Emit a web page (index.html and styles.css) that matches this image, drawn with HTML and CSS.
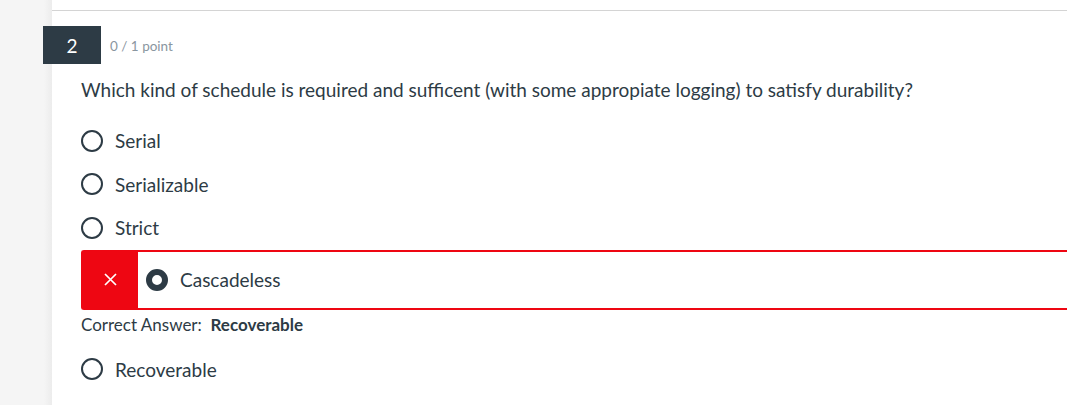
FILE: index.html
```html
<!DOCTYPE html>
<html>
<head>
<meta charset="utf-8">
<link rel="stylesheet" href="styles.css">
</head>
<body>
<div class="page">
  <aside class="sidebar"></aside>
  <main class="main">
    <div class="topline"></div>
    <div class="qheader">
      <div class="qnum">2</div>
      <div class="qpoints">0 / 1 point</div>
    </div>
    <div class="qbody">
      <p class="qtext">Which kind of schedule is required and sufficent (with some appropiate logging) to satisfy durability?</p>
      <div class="answers">
        <div class="answer"><span class="radio"></span><span class="label">Serial</span></div>
        <div class="answer"><span class="radio"></span><span class="label">Serializable</span></div>
        <div class="answer"><span class="radio"></span><span class="label">Strict</span></div>
        <div class="answer wrong">
          <div class="mark">
            <svg width="15" height="15" viewBox="0 0 15 15"><path d="M2 2 L13 13 M13 2 L2 13" stroke="#fff" stroke-width="1.7" fill="none"/></svg>
          </div>
          <span class="radio checked"></span><span class="label">Cascadeless</span>
        </div>
        <div class="correct">Correct Answer:&nbsp; <b>Recoverable</b></div>
        <div class="answer"><span class="radio"></span><span class="label">Recoverable</span></div>
      </div>
    </div>
  </main>
</div>
</body>
</html>
```
FILE: styles.css
```css
html, body {
  margin: 0;
  padding: 0;
  background: #fff;
  font-family: Lato, "Open Sans", sans-serif;
  color: #2d3b45;
}
.page {
  display: flex;
  height: 405px;
  overflow: hidden;
}
.sidebar {
  width: 52px;
  flex: none;
  background: linear-gradient(to right, #f5f5f5 0, #f5f5f5 44px, #ececec 52px);
}
.main {
  flex: 1;
  min-width: 0;
}
.topline {
  height: 10px;
  border-bottom: 1px solid #d4d4d4;
}
.qheader {
  display: flex;
  align-items: center;
  margin-top: 15px;
  margin-left: -9px;
}
.qnum {
  width: 58px;
  height: 38px;
  background: #2d3b45;
  color: #fff;
  font-size: 19px;
  display: flex;
  align-items: center;
  justify-content: center;
}
.qpoints {
  margin-left: 9px;
  font-size: 13.5px;
  color: #8a96a0;
  margin-top: 1px;
}
.qbody {
  padding-left: 29px;
}
.qtext {
  margin: 14px 0 0 0;
  font-size: 19px;
  line-height: 24px;
}
.answers {
  margin-top: 17px;
}
.answer {
  display: flex;
  align-items: center;
  height: 43.5px;
}
.radio {
  width: 18px;
  height: 18px;
  border: 2px solid #2d3b45;
  border-radius: 50%;
  flex: none;
  margin-right: 12px;
  box-sizing: content-box;
}
.radio.checked {
  width: 10px;
  height: 10px;
  border: 6px solid #2d3b45;
  background: #fff;
}
.label {
  font-size: 19px;
}
.answer.wrong {
  height: 56px;
  border: 2px solid #ee0612;
  border-right: none;
  border-radius: 3px 0 0 3px;
}
.mark {
  width: 55px;
  align-self: stretch;
  background: #ee0612;
  display: flex;
  align-items: center;
  justify-content: center;
  margin-right: 8px;
}
.correct {
  font-size: 17px;
  margin-top: 5px;
  line-height: 20px;
}
.correct b {
  font-weight: 700;
}
.correct + .answer {
  margin-top: 13px;
}
```
